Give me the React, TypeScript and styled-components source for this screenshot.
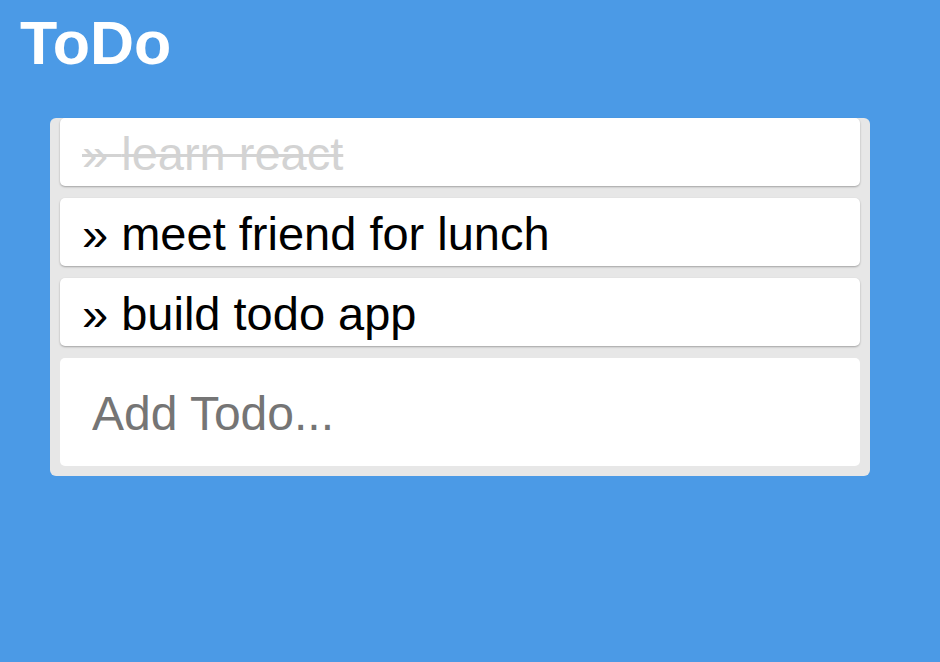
import styled, { createGlobalStyle } from 'styled-components';

const GlobalStyle = createGlobalStyle`
  html, body {
    margin: 0;
    padding: 0;
    background-color: #4b9ae6;
    font-family: "Liberation Sans", Arial, sans-serif;
  }
`;

const Page = styled.div`
  width: 100%;
  min-height: 662px;
  padding: 0 20px;
  box-sizing: border-box;
`;

const Title = styled.h1`
  margin: 0;
  padding-top: 8px;
  height: 118px;
  box-sizing: border-box;
  color: #ffffff;
  font-size: 61px;
  font-weight: 700;
  line-height: 70px;
`;

const Panel = styled.div`
  width: 820px;
  margin-left: 30px;
  background-color: #e7e7e7;
  border-radius: 6px;
  padding: 0 10px 10px;
  box-sizing: border-box;
  display: flex;
  flex-direction: column;
  gap: 12px;
`;

const Item = styled.div<{ $done?: boolean }>`
  height: 68px;
  background-color: #ffffff;
  border-radius: 5px;
  box-shadow: 0 1px 2px rgba(0, 0, 0, 0.3);
  padding: 3px 22px 0;
  box-sizing: border-box;
  font-size: 47px;
  line-height: 65px;
  color: ${(p) => (p.$done ? '#d3d3d3' : '#000000')};
  text-decoration: ${(p) => (p.$done ? 'line-through' : 'none')};
  text-decoration-thickness: 3px;
  white-space: nowrap;
  cursor: pointer;
`;

const AddInput = styled.input`
  height: 108px;
  border: none;
  outline: none;
  border-radius: 5px;
  background-color: #ffffff;
  padding: 2px 32px 0;
  box-sizing: border-box;
  font-family: "Liberation Sans", Arial, sans-serif;
  font-size: 48px;
  color: #000000;

  &::placeholder {
    color: #757575;
  }
`;

const todos = [
  { text: 'learn react', done: true },
  { text: 'meet friend for lunch', done: false },
  { text: 'build todo app', done: false },
];

export default function App() {
  return (
    <>
      <GlobalStyle />
      <Page>
        <Title>ToDo</Title>
        <Panel>
          {todos.map((t) => (
            <Item key={t.text} $done={t.done}>
              » {t.text}
            </Item>
          ))}
          <AddInput placeholder="Add Todo..." />
        </Panel>
      </Page>
    </>
  );
}
